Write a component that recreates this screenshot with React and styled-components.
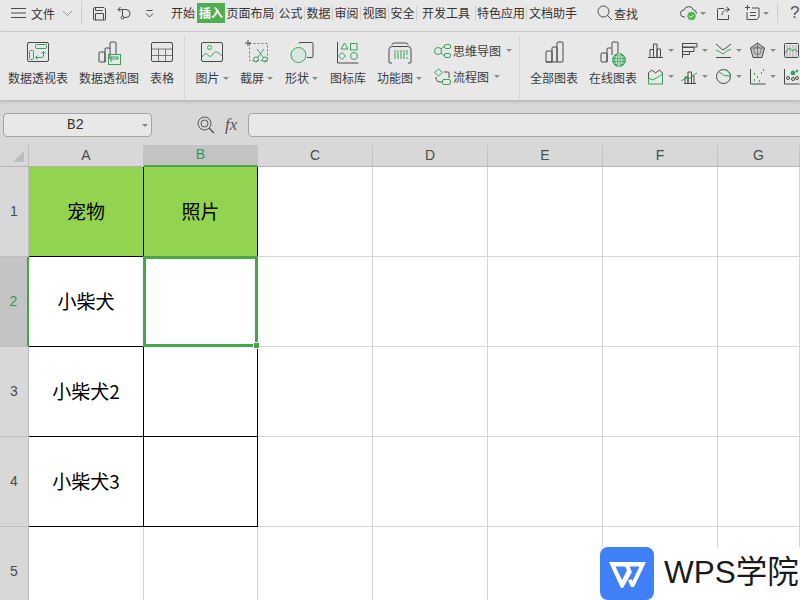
import styled, { createGlobalStyle } from "styled-components";

const INK = "#4a4a4a";
const GREEN = "#36a35c";
const CJK = `"Noto Sans CJK SC", "Noto Sans", sans-serif`;

const GlobalStyle = createGlobalStyle`
  html, body { margin: 0; padding: 0; background: #fff; }
  body { font-family: ${CJK}; }
`;

const Svg = styled.svg`
  display: block;
  flex: none;
`;

const Icon = ({ size = 24, h, children }) => (
  <Svg width={size} height={h || size} viewBox={`0 0 ${size} ${h || size}`} fill="none" stroke={INK} strokeWidth="1">
    {children}
  </Svg>
);

const PivotIcon = () => (
  <Icon size={24}>
    <rect x="1.500" y="1.500" width="21" height="19" rx="1.500" />
    <rect x="9.500" y="3.500" width="11" height="4" rx="1" stroke={GREEN} />
    <rect x="3.500" y="9.500" width="4" height="9" rx="1" stroke={GREEN} />
    <path d="M10 16.500h5c2 0 2.500-1 2.500-2.500v-3M15.500 12.500l2-2 2 2M11.500 14.500l-2 2 2 2" stroke={GREEN} />
  </Icon>
);
const PivotChartIcon = () => (
  <Icon size={24}>
    <path d="M3 11h4a1 1 0 0 1 1 1v9H3a1 1 0 0 1-1-1v-8a1 1 0 0 1 1-1zM8 21V8a1 1 0 0 1 1-1h3a1 1 0 0 1 1 1v10M13 8V2a1 1 0 0 1 1-1h4a1 1 0 0 1 1 1v11" />
    <rect x="11.500" y="13.500" width="12" height="10" stroke={GREEN} />
    <rect x="14" y="16" width="7" height="2" stroke={GREEN} />
    <path d="M14 18v3" stroke={GREEN} />
  </Icon>
);
const TableIcon = () => (
  <Icon size={24}>
    <rect x="1.500" y="1.500" width="21" height="19" rx="1.500" />
    <path d="M1.500 8h21M1.500 14.500h21M8.500 8v12.500M15.500 8v12.500" strokeOpacity=".7" />
  </Icon>
);
const PictureIcon = () => (
  <Icon size={24}>
    <rect x="1.500" y="1.500" width="21" height="19" rx="1.500" />
    <circle cx="9.500" cy="6.500" r="2" stroke={GREEN} />
    <path d="M2 16c3-4 4-4 6-2s3 2 5-1 4-3 9 2" stroke={GREEN} />
  </Icon>
);
const ScreenshotIcon = () => (
  <Icon size={26}>
    <path d="M1 3h6M4 0v6" />
    <rect x="5.500" y="3.500" width="18" height="17" strokeDasharray="2 2" strokeOpacity=".7" />
    <circle cx="12" cy="19.500" r="2.500" stroke={GREEN} />
    <circle cx="21" cy="19.500" r="2.500" stroke={GREEN} />
    <path d="M13.500 17.500L20 9M19.500 17.500L13 9" stroke={GREEN} />
  </Icon>
);
const ShapeIcon = () => (
  <Icon size={26}>
    <path d="M10 3.500a1 1 0 0 1 1-1h12a1 1 0 0 1 1 1v13a1 1 0 0 1-1 1h-5" />
    <circle cx="9.500" cy="15" r="7.500" stroke={GREEN} fill="#d8e8dc" />
  </Icon>
);
const LibraryIcon = () => (
  <Icon size={24}>
    <path d="M1.500 1v21h21" />
    <path d="M7.500 2l3.500 6H4zM5 11.500l3.500 3.500L5 18.500 1.500 15z" stroke={GREEN} transform="translate(1 0)" />
    <rect x="14.500" y="2.500" width="6.500" height="6.500" stroke={GREEN} />
    <circle cx="18" cy="15" r="3.500" stroke={GREEN} />
  </Icon>
);
const FunctionIcon = () => (
  <Icon size={24}>
    <path d="M1 8.500a3 3 0 0 1 3-3h16a3 3 0 0 1 3 3V21a1 1 0 0 1-1 1h-2M4 22H2a1 1 0 0 1-1-1V8.500M4 4c0-1.500 1-2 2-2h12c1 0 2 .5 2 2" />
    <path d="M7 9v9M10 9v9M13 9v9M16 9v9M19 9v5M19 16v2" stroke={GREEN} />
  </Icon>
);
const MindIcon = () => (
  <Icon size={18}>
    <circle cx="5" cy="9" r="3.500" stroke={GREEN} />
    <rect x="11.500" y="2.500" width="6" height="4" rx="1.500" stroke={GREEN} />
    <rect x="11.500" y="11.500" width="6" height="4" rx="1.500" stroke={GREEN} />
    <path d="M8 7l3.500-3M8 11l3.500 3" stroke={GREEN} />
  </Icon>
);
const FlowIcon = () => (
  <Icon size={18}>
    <path d="M5.500 1l4 3.500-4 3.500-4-3.500z" stroke={GREEN} />
    <rect x="9.500" y="11.500" width="8" height="5" rx="1.500" stroke={GREEN} />
    <path d="M3 9c0 4 1 5 6 5M11 4h4a1 1 0 0 1 1 1v5" />
  </Icon>
);
const BarsIcon = () => (
  <Icon size={24}>
    <path d="M5 10h4a1 1 0 0 1 1 1v10H4V11a1 1 0 0 1 1-1zM10 21V7a1 1 0 0 1 1-1h3a1 1 0 0 1 1 1v14M15 21V2a1 1 0 0 1 1-1h4a1 1 0 0 1 1 1v18a1 1 0 0 1-1 1H4" />
  </Icon>
);
const OnlineChartIcon = () => (
  <Icon size={28}>
    <path d="M3 14h4a1 1 0 0 1 1 1v8H3a1 1 0 0 1-1-1v-7a1 1 0 0 1 1-1zM8 23V10a1 1 0 0 1 1-1h3a1 1 0 0 1 1 1v6M13 9V4a1 1 0 0 1 1-1h4a1 1 0 0 1 1 1v11" />
    <circle cx="20" cy="21" r="6.500" fill={GREEN} stroke={GREEN} />
    <path d="M13.500 21h13M14.500 18h11M14.500 24h11M20 14.500v13M20 14.500c-4 4-4 9 0 13M20 14.500c4 4 4 9 0 13" stroke="#e8e8e8" strokeWidth=".8" />
  </Icon>
);

const miniPaths = [
  <path key="a" d="M1 15.500h15M3 15.500V7.500h3.500v8M6.500 15.500V2h3.500v13.500M10 15.500V7h3.500v8.500" />,
  <path key="b" d="M1.500 1v15M1.500 1.500h14.500v3.500H1.500M1.500 5.500h11.500v4H1.500M1.500 9.500h7v3H1.500" />,
  <g key="c"><path d="M1 2l4 3.500 3 2.500 3-2 5-4" /><path d="M1 8l4 2 3 2 4-3 4-2" stroke={GREEN} /><path d="M1 15.500h15" /></g>,
  <g key="d"><path d="M8.500 1l7 5-2.500 9.500H4L1.500 6z" fill="#c8c8c8" /><path d="M8.500 4l4 3-1.500 5H6L4.500 7zM8.500 1v14M1.500 6l14 0" strokeOpacity=".6" /></g>,
  <g key="e"><rect x="1.500" y="1.500" width="14" height="14" rx="1" /><path d="M4 3v12M7 3v12M10 3v12M13 3v12" strokeOpacity=".4" /><path d="M2 11l4-5 4 3 2-2 3 3" stroke={GREEN} /></g>,
  <g key="f"><path d="M1.500 10V5l3-3 4 3 4-3 3 3v4" /><path d="M1.500 10l4 2 4-2 6-4v10h-14z" stroke={GREEN} /></g>,
  <g key="g"><path d="M3 15.500h12M4 15.500V9h3v6.500M7 15.500V4h3.500v11.500M10.500 15.500V8H13v7.500" /><path d="M0 13l5-3 3 1 3-3 5-3" stroke={GREEN} /></g>,
  <g key="h"><circle cx="8.500" cy="8.500" r="7" /><path d="M8.500 1.500a7 7 0 0 1 7 7l-7-1.500L3.500 3.500" stroke={GREEN} /></g>,
  <g key="i"><path d="M1.500 1v15h15" /><path d="M5 12h1M5 6h1M8 9h1M10 13h1M12 5h1M14 2h1" stroke={GREEN} strokeWidth="2" /></g>,
  <g key="j"><path d="M1.500 1v15h15" /><circle cx="5" cy="10" r="1.500" /><circle cx="10" cy="5" r="2" fill={GREEN} stroke={GREEN} /><circle cx="14" cy="3" r="1" fill={GREEN} stroke={GREEN} /><circle cx="10" cy="11" r="1.500" /><circle cx="14" cy="10" r="1.500" /></g>,
];

const Logo = () => (
  <Svg width="54" height="53" viewBox="0 0 54 53">
    <rect width="54" height="53" rx="8" fill="#3f80f6" />
    <path fillRule="evenodd" d="M9 15H46L34 40H31L28 33.500L31 32L32.500 34L39.500 19.500H29.500L32 25L23 41H21zM15.500 19.500L22 33L27 23.500L25 19.500z" fill="#fff" />
  </Svg>
);

const Window = styled.div`
  width: 800px;
  height: 600px;
  overflow: hidden;
  position: relative;
  background: #fff;
  display: flex;
  flex-direction: column;
`;

const MenuBar = styled.div`
  height: 32px;
  flex: none;
  box-sizing: border-box;
  padding: 3px 0 8px 11px;
  background: #e8e8e8;
  border-bottom: 1px solid #d6d6d6;
  display: flex;
  align-items: center;
  font-size: 12px;
  color: #333;
`;

const MenuGroup = styled.div`
  box-sizing: border-box;
  display: flex;
  align-items: center;
  gap: ${(p) => p.$gap || 0}px;
  width: ${(p) => (p.$w ? `${p.$w}px` : "auto")};
  margin-left: ${(p) => p.$ml || 0}px;
  padding-left: ${(p) => p.$pl || 0}px;
  flex: none;
`;

const Bar = styled.span`
  width: 1px;
  height: ${(p) => p.$h || 16}px;
  background: #cfcfcf;
  flex: none;
  margin: 0 ${(p) => p.$m || 0}px;
`;

const Tab = styled.span`
  box-sizing: border-box;
  width: ${(p) => p.$w}px;
  height: 20px;
  line-height: 20px;
  flex: none;
  text-align: center;
  white-space: nowrap;
  background: ${(p) => (p.$active ? "#4fae52" : "transparent")};
  color: ${(p) => (p.$active ? "#fff" : "#333")};
  font-weight: ${(p) => (p.$active ? 700 : 400)};
`;

const Help = styled.span`
  font-size: 17px;
  color: #555;
  font-family: "Liberation Sans", sans-serif;
  margin-left: 4px;
`;

const Ribbon = styled.div`
  height: 68px;
  flex: none;
  box-sizing: border-box;
  padding-left: 8px;
  background: #e8e8e8;
  display: flex;
  gap: 10px;
  position: relative;
  box-shadow: 0 1px 4px rgba(0, 0, 0, 0.22);
  z-index: 1;
`;

const RibbonGroup = styled.div`
  display: flex;
  gap: 11px;
  flex: none;
`;

const RibbonDivider = styled.span`
  width: 1px;
  height: 63px;
  margin-top: 4px;
  background: #d4d4d4;
  flex: none;
`;

const BigButton = styled.div`
  width: ${(p) => p.$w}px;
  flex: none;
  display: flex;
  flex-direction: column;
  align-items: center;
`;

const IconSlot = styled.div`
  height: 26px;
  margin-top: 8px;
  display: flex;
  align-items: center;
  justify-content: center;
`;

const ButtonLabel = styled.div`
  margin-top: 2px;
  height: 20px;
  line-height: 20px;
  font-size: 12px;
  color: #3c3c3c;
  white-space: nowrap;
  display: flex;
  align-items: center;
`;

const Caret = styled.span`
  width: 0;
  height: 0;
  flex: none;
  margin-left: ${(p) => p.$ml ?? 3}px;
  border-left: 3px solid transparent;
  border-right: 3px solid transparent;
  border-top: 3px solid #8a8a8a;
`;

const SmallStack = styled.div`
  width: 76px;
  flex: none;
  padding-top: 9px;
  display: flex;
  flex-direction: column;
  gap: 7px;
`;

const SmallButton = styled.div`
  height: 19px;
  display: flex;
  align-items: center;
  gap: 2px;
  font-size: 12px;
  color: #3c3c3c;
  white-space: nowrap;
`;

const ChartGrid = styled.div`
  display: grid;
  grid-template-columns: repeat(5, 34px);
  grid-auto-rows: 26px;
  padding-top: 5px;
  margin-left: -1px;
  flex: none;
`;

const ChartCell = styled.div`
  display: flex;
  align-items: center;
`;

const FormulaBar = styled.div`
  height: 45px;
  flex: none;
  box-sizing: border-box;
  padding: 13px 0 8px 3px;
  background: #d8d8d8;
  display: flex;
  align-items: center;
`;

const NameBox = styled.div`
  width: 149px;
  height: 24px;
  flex: none;
  box-sizing: border-box;
  position: relative;
  background: #e8e8e8;
  border: 1px solid #a3a3a3;
  border-radius: 4px;
  font-family: "Liberation Mono", monospace;
  font-size: 14px;
  color: #333;
  padding-right: 4px;
  display: flex;
  align-items: center;
  justify-content: center;
`;

const NameCaret = styled(Caret)`
  position: absolute;
  right: 3px;
  top: 10px;
`;

const Fx = styled.span`
  font-family: "Liberation Serif", serif;
  font-style: italic;
  font-size: 17px;
  color: #555;
  margin: 0 11px 0 10px;
`;

const FormulaInput = styled.div`
  flex: 1;
  height: 24px;
  box-sizing: border-box;
  margin-right: -6px;
  background: #e8e8e8;
  border: 1px solid #a3a3a3;
  border-radius: 4px;
`;

const Sheet = styled.div`
  flex: 1;
  min-height: 0;
  overflow: hidden;
  display: grid;
  grid-template-columns: 29px 115px 114px 115px 115px 115px 115px 82px;
  grid-template-rows: 22px 90px 90px 90px 90px 90px;
  background: #fff;
  position: relative;
`;

const Corner = styled.div`
  background: #d8d8d8;
  border-right: 1px solid #bdbdbd;
  border-bottom: 1px solid #b5b5b5;
  position: relative;
  &::after {
    content: "";
    position: absolute;
    right: 4px;
    bottom: 4px;
    width: 0;
    height: 0;
    border-left: 11px solid transparent;
    border-bottom: 11px solid #bcbcbc;
  }
`;

const ColHead = styled.div`
  box-sizing: border-box;
  background: ${(p) => (p.$on ? "#c4c4c4" : "#d8d8d8")};
  border-right: 1px solid #c2c2c2;
  border-bottom: ${(p) => (p.$on ? `2px solid #45a848` : "1px solid #b5b5b5")};
  color: ${(p) => (p.$on ? "#2f9a55" : "#4c4c4c")};
  font-family: "Liberation Sans", sans-serif;
  font-size: 14px;
  display: flex;
  align-items: center;
  justify-content: center;
  padding-bottom: 2px;
`;

const RowHead = styled.div`
  box-sizing: border-box;
  background: ${(p) => (p.$on ? "#c4c4c4" : "#d8d8d8")};
  border-right: ${(p) => (p.$on ? "2px solid #45a848" : "1px solid #bdbdbd")};
  border-bottom: 1px solid #bdbdbd;
  color: ${(p) => (p.$on ? "#2f9a55" : "#4c4c4c")};
  font-family: "Liberation Sans", sans-serif;
  font-size: 14px;
  display: flex;
  align-items: center;
  justify-content: center;
  padding-bottom: 1px;
`;

const Cell = styled.div`
  box-sizing: border-box;
  position: relative;
  background: ${(p) => (p.$fill ? "#92d450" : "#fff")};
  border-right: 1px solid ${(p) => (p.$dark ? "#000" : "#d4d4d4")};
  border-bottom: 1px solid ${(p) => (p.$dark ? "#000" : "#d4d4d4")};
  color: #000;
  font-size: 19px;
  display: flex;
  align-items: center;
  justify-content: center;
  padding-bottom: 3px;
`;

const Selection = styled.div`
  position: absolute;
  left: -1px;
  top: -1px;
  right: -1px;
  bottom: -1px;
  border: 3px solid #45a848;
  z-index: 1;
  &::after {
    content: "";
    position: absolute;
    right: -5px;
    bottom: -5px;
    width: 5px;
    height: 5px;
    background: #45a848;
    border: 1px solid #fff;
  }
`;

const Watermark = styled.div`
  position: absolute;
  right: 0;
  bottom: 0;
  width: 200px;
  height: 53px;
  background: #fff;
  display: flex;
  align-items: center;
  gap: 10px;
  z-index: 2;
`;

const WatermarkText = styled.span`
  font-family: "Liberation Sans", "Noto Sans CJK SC", sans-serif;
  font-size: 31.500px;
  line-height: 1;
  color: #1a1a1a;
  white-space: nowrap;
  margin-bottom: 1px;
`;

const tabs = [
  ["开始", 28], ["插入", 28, true], ["页面布局", 51, false, true], ["公式", 27, false, true], ["数据", 27, false, true],
  ["审阅", 27, false, true], ["视图", 27, false, true], ["安全", 27, false, true], ["开发工具", 58, false, true],
  ["特色应用", 50, false, true], ["文档助手", 52],
];

const columns = ["A", "B", "C", "D", "E", "F", "G"];
const rows = [
  ["宠物", "照片"],
  ["小柴犬", ""],
  ["小柴犬2", ""],
  ["小柴犬3", ""],
  null,
];

const App = () => (
  <Window>
    <GlobalStyle />
    <MenuBar>
      <MenuGroup $w={20}>
        <Icon size={15} h={12}><path d="M0 1.500h15M0 6h15M0 10.500h15" /></Icon>
      </MenuGroup>
      <MenuGroup $w={31}>文件</MenuGroup>
      <MenuGroup $w={19}>
        <Icon size={11} h={7}><path d="M1 1l4.500 4.500L10 1" stroke="#999" /></Icon>
      </MenuGroup>
      <Bar $h={24} />
      <MenuGroup $w={25} $pl={10}>
        <Icon size={15}><path d="M3 1.500h9l1.500 1.500v10a1 1 0 0 1-1 1h-10a1 1 0 0 1-1-1V3a1.500 1.500 0 0 1 1.500-1.500zM3.500 14V7.500h8V14M3.500 1.500v3h7" /></Icon>
      </MenuGroup>
      <MenuGroup $w={28} $pl={10}>
        <Icon size={15}><path d="M1 3.500h8a4 4 0 0 1 0 8H6.500M3.500 1L1 3.500 3.500 6M5.500 3.500V10" /><circle cx="5.500" cy="11.500" r="1.500" /></Icon>
      </MenuGroup>
      <MenuGroup $w={19} $pl={10}>
        <Icon size={9} h={9}><path d="M1.500 1.500h6M1 4.500l3.500 3.500L8 4.500" /></Icon>
      </MenuGroup>
      <MenuGroup $ml={15}>
        {tabs.map(([label, w, active, bar]) => (
          <MenuGroup key={label}>
            <Tab $w={w} $active={active}>{label}</Tab>
            {bar && <Bar $h={15} />}
          </MenuGroup>
        ))}
      </MenuGroup>
      <MenuGroup $gap={1} $ml={18}>
        <Icon size={16}><circle cx="6.500" cy="6.500" r="5.500" /><path d="M10.500 10.500L15 15" /></Icon>
        查找
      </MenuGroup>
      <MenuGroup $ml={42}>
        <Icon size={17} h={16}>
          <path d="M5 12H4a3.500 3.500 0 0 1 0-7 5 5 0 0 1 9.500 0 3.500 3.500 0 0 1 3 3.500" />
          <circle cx="11.500" cy="11" r="3.800" fill="#4fb848" stroke="#4fb848" />
          <path d="M9.500 11l1.500 1.500 2.500-2.500" stroke="#fff" />
        </Icon>
        <Caret />
      </MenuGroup>
      <MenuGroup $ml={10}>
        <Icon size={15}><path d="M8 2.500H2.500a1 1 0 0 0-1 1v10h11V9M6 9c0-3 2-5.500 7-5.500M10.500 1L13.500 3.500 10.500 6" /></Icon>
      </MenuGroup>
      <MenuGroup $ml={13}>
        <Icon size={16}><path d="M1 2.500h5M3.500 0v5M8 3h7v9l-2 2.500H3V7M6 7.500h6M6 10.500h6" /></Icon>
        <Caret />
      </MenuGroup>
      <Bar $h={20} $m={8} />
      <Help>?</Help>
    </MenuBar>

    <Ribbon>
      <RibbonGroup>
        <BigButton $w={60}><IconSlot><PivotIcon /></IconSlot><ButtonLabel>数据透视表</ButtonLabel></BigButton>
        <BigButton $w={60}><IconSlot><PivotChartIcon /></IconSlot><ButtonLabel>数据透视图</ButtonLabel></BigButton>
        <BigButton $w={24}><IconSlot><TableIcon /></IconSlot><ButtonLabel>表格</ButtonLabel></BigButton>
      </RibbonGroup>
      <RibbonDivider />
      <RibbonGroup>
        <BigButton $w={34}><IconSlot><PictureIcon /></IconSlot><ButtonLabel>图片<Caret /></ButtonLabel></BigButton>
        <BigButton $w={33}><IconSlot><ScreenshotIcon /></IconSlot><ButtonLabel>截屏<Caret /></ButtonLabel></BigButton>
        <BigButton $w={35}><IconSlot><ShapeIcon /></IconSlot><ButtonLabel>形状<Caret /></ButtonLabel></BigButton>
        <BigButton $w={36}><IconSlot><LibraryIcon /></IconSlot><ButtonLabel>图标库</ButtonLabel></BigButton>
        <BigButton $w={45}><IconSlot><FunctionIcon /></IconSlot><ButtonLabel>功能图<Caret /></ButtonLabel></BigButton>
        <SmallStack>
          <SmallButton><MindIcon />思维导图<Caret /></SmallButton>
          <SmallButton><FlowIcon />流程图<Caret /></SmallButton>
        </SmallStack>
      </RibbonGroup>
      <RibbonDivider />
      <RibbonGroup>
        <BigButton $w={48}><IconSlot><BarsIcon /></IconSlot><ButtonLabel>全部图表</ButtonLabel></BigButton>
        <BigButton $w={48}><IconSlot><OnlineChartIcon /></IconSlot><ButtonLabel>在线图表</ButtonLabel></BigButton>
        <ChartGrid>
          {miniPaths.map((path, i) => (
            <ChartCell key={i}>
              <Icon size={17}>{path}</Icon>
              <Caret $ml={4} />
            </ChartCell>
          ))}
        </ChartGrid>
      </RibbonGroup>
    </Ribbon>

    <FormulaBar>
      <NameBox>B2<NameCaret $ml={0} /></NameBox>
      <MenuGroup $ml={45}>
        <Icon size={18}>
          <circle cx="7.500" cy="7.500" r="6.500" stroke="#555" />
          <circle cx="7.500" cy="7.500" r="3.500" stroke="#555" />
          <path d="M12 12l5 5" stroke="#555" strokeWidth="1.500" />
        </Icon>
      </MenuGroup>
      <Fx>fx</Fx>
      <FormulaInput />
    </FormulaBar>

    <Sheet>
      <Corner />
      {columns.map((c) => <ColHead key={c} $on={c === "B"}>{c}</ColHead>)}
      {rows.flatMap((row, r) => [
        <RowHead key={`h${r}`} $on={r === 1}>{r + 1}</RowHead>,
        ...columns.map((c, i) => (
          <Cell key={`${c}${r}`} $fill={r === 0 && i < 2} $dark={row && i < 2}>
            {row && i < 2 ? row[i] : ""}
            {r === 1 && i === 1 && <Selection />}
          </Cell>
        )),
      ])}
      <Watermark>
        <Logo />
        <WatermarkText>WPS学院</WatermarkText>
      </Watermark>
    </Sheet>
  </Window>
);

export default App;
